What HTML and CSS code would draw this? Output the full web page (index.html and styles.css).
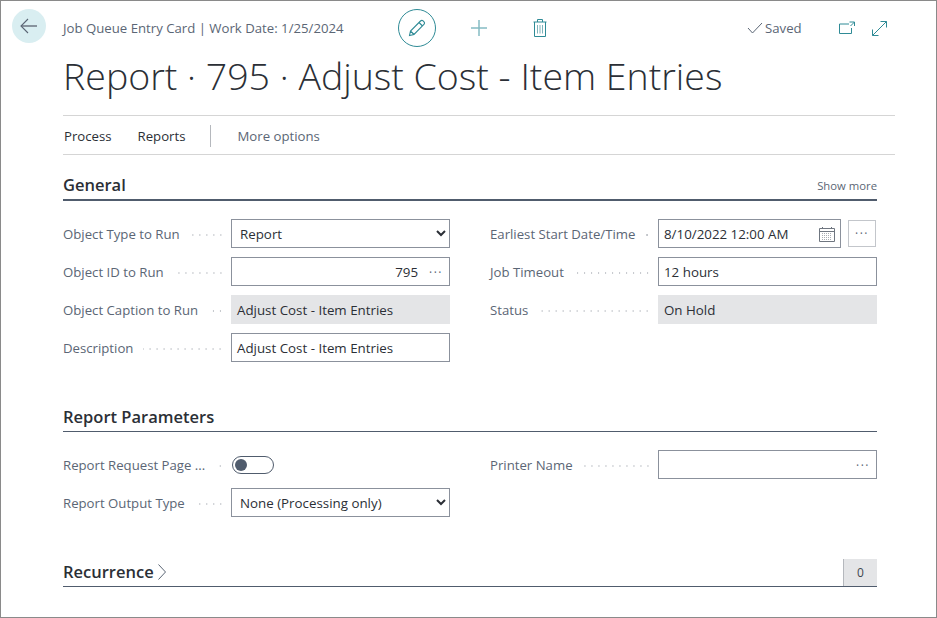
FILE: index.html
```html
<!DOCTYPE html>
<html lang="en">
<head>
    <meta charset="UTF-8">
    <meta name="viewport" content="width=device-width, initial-scale=1.0">
    <title>Job Queue Entry Card</title>
    <link rel="stylesheet" href="styles.css">
</head>
<body>
    <div class="card">
        <header class="page-head">
            <div class="top-row">
                <button class="back-btn" type="button" aria-label="Back">
                    <svg width="20" height="20" viewBox="0 0 20 20"><path d="M18 10H2" fill="none" stroke="#6b7480" stroke-width="1.500"/><path d="M9 3l-7 7 7 7" fill="none" stroke="#5b6675" stroke-width="1.100"/></svg>
                </button>
                <div class="crumb">Job Queue Entry Card | Work Date: 1/25/2024</div>
                <div class="page-tools">
                    <button class="edit-btn" type="button" aria-label="Edit">
                        <svg width="18" height="18" viewBox="0 0 18 18"><path d="M1.500 16.500l1-4.500L12.500 2c.8-.8 1.900-.8 2.600-.1l.9.900c.7.700.7 1.800-.1 2.600L6 15.500zM2.500 12L6 15.500M11 3.500l3.500 3.500" fill="none" stroke="#2f8b96" stroke-width="1.100"/></svg>
                    </button>
                    <button class="tool-btn first" type="button" aria-label="New">
                        <svg width="18" height="18" viewBox="0 0 18 18"><path d="M9 1v16M1 9h16" fill="none" stroke="#85bcc3" stroke-width="1.500"/></svg>
                    </button>
                    <button class="tool-btn" type="button" aria-label="Delete">
                        <svg width="14" height="18" viewBox="0 0 14 18"><path d="M.5 3h13M4.500 3V.5h5V3M1.500 3v14.500h11V3" fill="none" stroke="#2f8b96" stroke-width="1"/><path d="M4.500 6v8.500M7 6v8.500M9.500 6v8.500" fill="none" stroke="#7fb4bb" stroke-width="1"/></svg>
                    </button>
                </div>
                <div class="saved">
                    <svg width="16" height="12" viewBox="0 0 16 12"><path d="M1 6l4.500 5L15 1" fill="none" stroke="#5b6675" stroke-width="1"/></svg>
                    Saved
                </div>
                <button class="corner-btn" type="button" aria-label="Open in new window">
                    <svg width="16" height="14" viewBox="0 0 16 14"><path d="M10 3H.5v9.500h12V7M10.500 1H15.500V5M15.500 1l-4 4" fill="none" stroke="#2f8b96" stroke-width="1"/></svg>
                </button>
                <button class="corner-btn" type="button" aria-label="Expand">
                    <svg width="15" height="15" viewBox="0 0 15 15"><path d="M.5 14.500L14.500 .5M8.500 .5h6v6M.5 8.500v6h6" fill="none" stroke="#2f8b96" stroke-width="1"/></svg>
                </button>
            </div>
            <h1 class="page-title">Report · 795 · Adjust Cost - Item Entries</h1>
            <nav class="action-bar">
                <a class="action">Process</a>
                <a class="action">Reports</a>
                <span class="action-sep"></span>
                <a class="action more">More options</a>
            </nav>
        </header>

        <main class="content">
            <section class="group">
                <div class="group-head heavy">
                    <h2>General</h2>
                    <a class="show-more">Show more</a>
                </div>
                <div class="fields">
                    <div class="col">
                        <div class="row">
                            <label>Object Type to Run</label><span class="dots"></span>
                            <select class="input"><option>Report</option></select>
                        </div>
                        <div class="row">
                            <label>Object ID to Run</label><span class="dots"></span>
                            <div class="input align-right">795<span class="more-dots">···</span></div>
                        </div>
                        <div class="row">
                            <label>Object Caption to Run</label><span class="dots"></span>
                            <div class="input readonly">Adjust Cost - Item Entries</div>
                        </div>
                        <div class="row">
                            <label>Description</label><span class="dots"></span>
                            <div class="input">Adjust Cost - Item Entries</div>
                        </div>
                    </div>
                    <div class="col">
                        <div class="row">
                            <label>Earliest Start Date/Time</label><span class="dots"></span>
                            <div class="date-wrap">
                                <div class="input date">8/10/2022 12:00 AM
                                    <svg width="16" height="15" viewBox="0 0 16 15"><path d="M.5 1.500h15v13H.5zM.5 4.500h15M3.500 0v2M12.500 0v2" fill="none" stroke="#6f7680" stroke-width="1"/><path d="M3 6.500h10M3 8.500h10M3 10.500h10M3 12.500h10" fill="none" stroke="#a9adb3" stroke-width="1" stroke-dasharray="1 1"/></svg>
                                </div>
                                <button class="assist-btn" type="button">···</button>
                            </div>
                        </div>
                        <div class="row">
                            <label>Job Timeout</label><span class="dots"></span>
                            <div class="input">12 hours</div>
                        </div>
                        <div class="row">
                            <label>Status</label><span class="dots"></span>
                            <div class="input readonly">On Hold</div>
                        </div>
                    </div>
                </div>
            </section>

            <section class="group params">
                <div class="group-head">
                    <h2>Report Parameters</h2>
                </div>
                <div class="fields">
                    <div class="col">
                        <div class="row">
                            <label class="short">Report Request Page ...</label><span class="dots"></span>
                            <div class="toggle-cell"><span class="toggle"><span class="knob"></span></span></div>
                        </div>
                        <div class="row">
                            <label>Report Output Type</label><span class="dots"></span>
                            <select class="input"><option>None (Processing only)</option></select>
                        </div>
                    </div>
                    <div class="col">
                        <div class="row">
                            <label>Printer Name</label><span class="dots"></span>
                            <div class="input align-right"><span class="more-dots">···</span></div>
                        </div>
                    </div>
                </div>
            </section>

            <section class="group recurrence">
                <div class="group-head">
                    <h2>Recurrence</h2>
                    <svg class="chevron" width="8" height="16" viewBox="0 0 8 16"><path d="M.5 .5L7.500 8 .5 15.500" fill="none" stroke="#5b6675" stroke-width="1"/></svg>
                    <span class="count">0</span>
                </div>
            </section>
        </main>
    </div>
</body>
</html>
```

FILE: styles.css
```css
* {
    box-sizing: border-box;
}

html, body {
    height: 100%;
}

body {
    margin: 0;
    font-family: "Open Sans", "Noto Sans", sans-serif;
    font-size: 13.200px;
    color: #2b2f36;
    background-color: #fff;
}

button {
    background: none;
    border: none;
    padding: 0;
    font: inherit;
    cursor: pointer;
}

.card {
    height: 618px;
    border: 1px solid #8a8a8a;
    overflow: hidden;
}

/* header */
.page-head {
    padding: 0 41px 0 62px;
}

.top-row {
    position: relative;
    display: flex;
    align-items: center;
    height: 54px;
}

.back-btn {
    position: absolute;
    left: -51px;
    top: 8px;
    width: 34px;
    height: 34px;
    border-radius: 50%;
    background-color: #d9eef1;
    display: flex;
    align-items: center;
    justify-content: center;
}

.crumb {
    width: 335px;
    color: #5b6675;
    white-space: nowrap;
}

.page-tools {
    display: flex;
    align-items: center;
}

.edit-btn {
    width: 38px;
    height: 38px;
    border: 1px solid #2f8b96;
    border-radius: 50%;
    display: flex;
    align-items: center;
    justify-content: center;
}

.tool-btn {
    width: 24px;
    height: 24px;
    margin-left: 37px;
    display: flex;
    align-items: center;
    justify-content: center;
}

.tool-btn.first {
    margin-left: 31px;
}

.saved {
    display: flex;
    align-items: center;
    gap: 2px;
    margin-left: 195px;
    color: #5b6675;
}

.corner-btn {
    width: 18px;
    height: 18px;
    margin-left: 15px;
    display: flex;
    align-items: center;
    justify-content: center;
}

.saved + .corner-btn {
    margin-left: 36px;
}

.page-title {
    margin: 0;
    height: 60px;
    font-size: 37.500px;
    font-weight: 300;
    line-height: 42px;
    color: #2b2f36;
    white-space: nowrap;
}

.action-bar {
    display: flex;
    align-items: center;
    height: 40px;
    border-top: 1px solid #d5d5d5;
    border-bottom: 1px solid #d5d5d5;
    padding: 1px 0 0 1px;
}

.action {
    margin-right: 26px;
}

.action-sep {
    width: 1px;
    height: 22px;
    background-color: #b5b8bd;
    margin-left: -1px;
    margin-right: 26px;
}

.more {
    color: #5b6675;
}

/* groups */
.content {
    padding: 0 59px 0 62px;
}

.group-head {
    display: flex;
    align-items: center;
    height: 32px;
    padding-top: 2px;
    border-bottom: 1px solid #505c6d;
}

.group-head.heavy {
    margin-top: 14px;
    padding-top: 0;
    border-bottom-width: 2px;
}

.group-head h2 {
    margin: 0;
    font-size: 16.500px;
    font-weight: 600;
    color: #2b2f36;
}

.show-more {
    margin-left: auto;
    padding-top: 3px;
    font-size: 11.300px;
    color: #5b6675;
}

.chevron {
    margin-left: 4px;
}

.count {
    margin-left: auto;
    align-self: flex-end;
    width: 34px;
    height: 27px;
    background-color: #e4e5e7;
    border-left: 1px solid #b5b8bd;
    color: #3f4650;
    font-size: 12px;
    line-height: 27px;
    text-align: center;
}

.fields {
    display: grid;
    grid-template-columns: 1fr 1fr;
    column-gap: 40px;
    margin-top: 18px;
}

.col {
    display: flex;
    flex-direction: column;
    gap: 9px;
}

.row {
    display: flex;
    align-items: center;
    height: 29px;
}

.row label {
    color: #5b6675;
    white-space: nowrap;
}

.dots {
    flex: 1;
    height: 2px;
    margin: 2px 7px 0 10px;
    background-image: radial-gradient(circle, #c3c6cb 0.8px, transparent 1px);
    background-size: 7px 2px;
    background-position: right center;
}

.input {
    width: 219px;
    height: 29px;
    flex-shrink: 0;
    border: 1px solid #8b919c;
    background-color: #fff;
    padding: 1px 5px 0;
    font-family: inherit;
    font-size: 13.330px;
    line-height: 27px;
    color: #2b2f36;
    border-radius: 0;
}

select.input {
    padding: 0 4px;
}

.readonly {
    border-color: #e4e5e7;
    background-color: #e4e5e7;
}

.align-right {
    display: flex;
    justify-content: flex-end;
    align-items: center;
}

.more-dots {
    margin-left: 11px;
    margin-right: 1px;
    color: #5b6675;
    font-size: 12px;
    letter-spacing: 1.500px;
}

.date-wrap {
    display: flex;
    width: 219px;
    flex-shrink: 0;
    justify-content: space-between;
    align-items: center;
}

.date {
    width: 183px;
    display: flex;
    align-items: center;
    justify-content: space-between;
}

.assist-btn {
    width: 28px;
    height: 27px;
    margin-right: 1px;
    border: 1px solid #c3c6cb;
    color: #5b6675;
    font-size: 12px;
    letter-spacing: 1.500px;
}

.toggle-cell {
    width: 219px;
    flex-shrink: 0;
    padding-left: 1px;
}

.toggle {
    display: flex;
    align-items: center;
    width: 42px;
    height: 18px;
    padding-left: 2px;
    border: 1px solid #505c6d;
    border-radius: 9px;
}

.knob {
    width: 12px;
    height: 12px;
    border-radius: 50%;
    background-color: #505c6d;
}

.params {
    margin-top: 38px;
}

.recurrence {
    margin-top: 38px;
}
```
